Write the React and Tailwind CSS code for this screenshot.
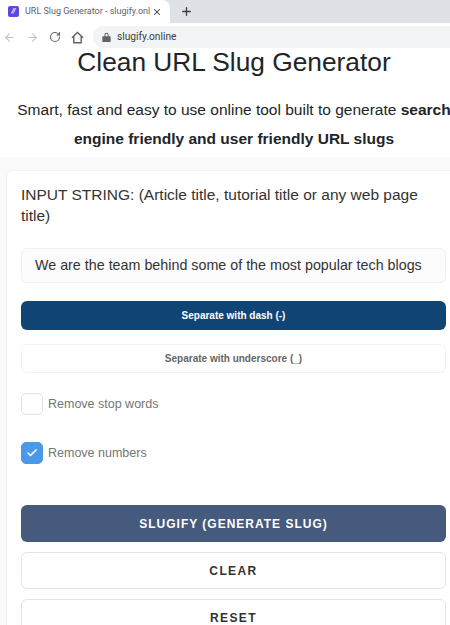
import { Check, X, Plus, ArrowLeft, ArrowRight, RotateCw } from 'lucide-react'

const font = { fontFamily: '"Liberation Sans", Arial, sans-serif' }

function Browser() {
  return (
    <div className="shrink-0" style={{ fontFamily: 'Roboto, sans-serif' }}>
      <div className="flex h-[23px] items-end bg-[#dee1e6]">
        <div className="flex h-[23px] w-[170px] items-center rounded-tr-lg bg-white pl-2 pr-2">
          <span className="flex h-[11px] w-[11px] shrink-0 items-center justify-center rounded-[2px] bg-[#5b48e0] text-[7px] font-bold italic leading-none text-white">
            //
          </span>
          <span className="ml-[6px] w-[125px] overflow-hidden whitespace-nowrap text-[9px] text-[#5f6368]">
            URL Slug Generator - slugify.online
          </span>
          <X className="ml-[2px] h-[10px] w-[10px] shrink-0 text-[#3c4043]" strokeWidth={2.5} />
        </div>
        <Plus className="mb-[5px] ml-[10px] h-[13px] w-[13px] text-[#3c4043]" strokeWidth={2.5} />
      </div>
      <div className="flex h-[25px] items-center bg-white pl-[3px] pt-[3px]">
        <ArrowLeft className="h-[13px] w-[13px] text-[#c2c6cc]" strokeWidth={2} />
        <ArrowRight className="ml-[10px] h-[13px] w-[13px] text-[#c2c6cc]" strokeWidth={2} />
        <RotateCw className="ml-[10px] h-[12px] w-[12px] text-[#5f6368]" strokeWidth={2.25} />
        <svg viewBox="0 0 14 14" className="ml-[10px] h-[13px] w-[13px] text-[#5f6368]" fill="none" stroke="currentColor" strokeWidth="1.5">
          <path d="M1 7.2 7 1.6l6 5.6M3 5.6v7h8v-7" />
        </svg>
        <div className="ml-[9px] flex h-[22px] flex-1 items-center rounded-l-full bg-[#f1f3f4] pl-[9px]">
          <svg viewBox="0 0 10 12" className="h-[10px] w-[9px] text-[#5f6368]" fill="currentColor">
            <path d="M2.5 5V3.4a2.5 2.5 0 0 1 5 0V5H9a1 1 0 0 1 1 1v5a1 1 0 0 1-1 1H1a1 1 0 0 1-1-1V6a1 1 0 0 1 1-1zM3.7 5h2.6V3.4a1.3 1.3 0 0 0-2.6 0z" />
          </svg>
          <span className="ml-[6px] text-[10.2px] text-[#3c4043]">slugify.online</span>
        </div>
      </div>
    </div>
  )
}

function Check2({ label, checked }) {
  return (
    <label className="flex items-center">
      <span
        className={`flex h-[22px] w-[22px] items-center justify-center rounded-[5px] border ${
          checked ? 'border-[#4a98e8] bg-[#4a98e8]' : 'border-[#dfe3e8] bg-white'
        }`}
      >
        {checked && <Check className="h-[12px] w-[12px] text-white" strokeWidth={3.5} />}
      </span>
      <span className="ml-[5px] text-[12.5px] text-[#757575]">{label}</span>
    </label>
  )
}

export default function App() {
  return (
    <div className="flex h-[625px] w-[450px] flex-col overflow-hidden bg-white" style={font}>
      <Browser />
      <div className="w-[468px]">
        <div className="bg-white pb-[4px] text-center text-[#212529]">
          <h1 className="text-[26.3px] leading-[28px]">Clean URL Slug Generator</h1>
          <p className="mt-[19px] text-[15.5px] leading-[29px]">
            Smart, fast and easy to use online tool built to generate <b>search engine friendly and user friendly URL slugs</b>
          </p>
        </div>
        <div className="bg-[#fafafa] pl-[6px] pr-[7px] pt-[13px]">
          <div className="rounded-md border border-[#f1f1f1] bg-white px-[14px] pb-[40px] pt-[13px]">
            <div className="text-[15.5px] leading-[21px] text-[#333333]">
              INPUT STRING: (Article title, tutorial title or any web page title)
            </div>
            <div className="mt-[22px] flex h-[35px] items-center whitespace-nowrap rounded-md border border-[#f0f0f0] bg-[#fcfcfc] px-[13px] text-[14.3px] text-[#333333]">
              We are the team behind some of the most popular tech blogs
            </div>
            <button className="mt-[18px] block h-[29px] w-full rounded-md bg-[#0f4475] text-[10px] font-bold text-white">
              Separate with dash (-)
            </button>
            <button className="mt-[14px] block h-[29px] w-full rounded-md border border-[#f2f2f2] bg-white text-[10px] font-bold text-[#666666]">
              Separate with underscore (_)
            </button>
            <div className="mt-[20px]">
              <Check2 label="Remove stop words" />
            </div>
            <div className="mt-[27px]">
              <Check2 label="Remove numbers" checked />
            </div>
            <button className="mt-[41px] block h-[37px] w-full rounded-md bg-[#455a7d] text-[12px] font-bold tracking-[1px] text-white">
              SLUGIFY (GENERATE SLUG)
            </button>
            <button className="mt-[10px] block h-[37px] w-full rounded-md border border-[#e2e5e8] bg-white text-[12px] font-bold tracking-[1.4px] text-[#333333]">
              CLEAR
            </button>
            <button className="mt-[10px] block h-[37px] w-full rounded-md border border-[#e2e5e8] bg-white text-[12px] font-bold tracking-[1.4px] text-[#333333]">
              RESET
            </button>
          </div>
        </div>
      </div>
    </div>
  )
}
